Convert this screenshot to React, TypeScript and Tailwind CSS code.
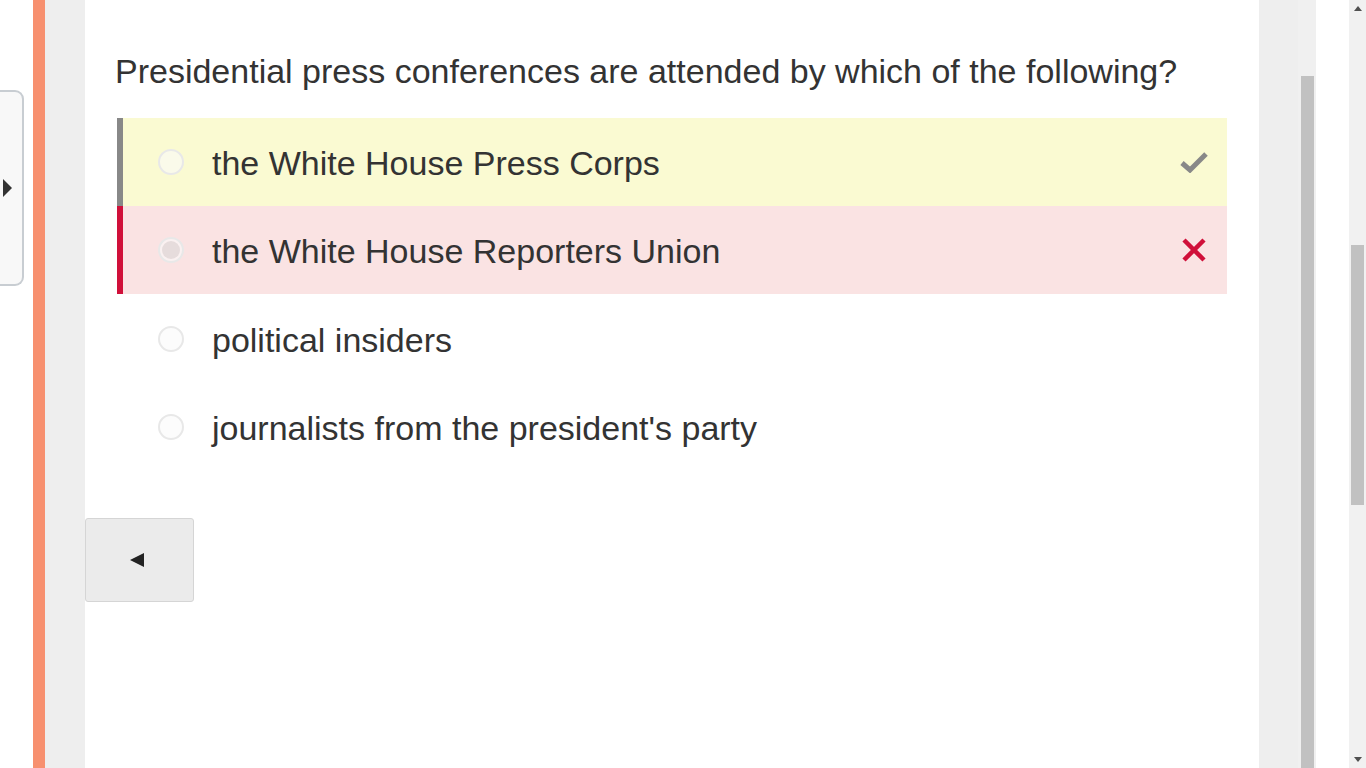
import React from "react";

type Opt = { label: string; state: "correct" | "wrong" | "none"; checked?: boolean };

const options: Opt[] = [
  { label: "the White House Press Corps", state: "correct" },
  { label: "the White House Reporters Union", state: "wrong", checked: true },
  { label: "political insiders", state: "none" },
  { label: "journalists from the president's party", state: "none" },
];

function Radio({ checked }: { checked?: boolean }) {
  return (
    <span className="flex h-[26px] w-[26px] items-center justify-center rounded-full border-2 border-[#e8e8e8] bg-[#fafafa]/60">
      {checked && <span className="h-[18px] w-[18px] rounded-full bg-[#e6dcdc]" />}
    </span>
  );
}

function OptionRow({ opt }: { opt: Opt }) {
  const rowCls =
    opt.state === "correct"
      ? "bg-[#fafad2] border-l-[6px] border-[#888888]"
      : opt.state === "wrong"
      ? "bg-[#fae3e3] border-l-[6px] border-[#d0103a]"
      : "border-l-[6px] border-transparent";
  return (
    <div className={`flex h-[88px] items-center ${rowCls}`}>
      <div className="flex w-[89px] justify-center pl-[7px]">
        <Radio checked={opt.checked} />
      </div>
      <span className="flex-1 pt-[2px] text-[34px] text-[#333333]">{opt.label}</span>
      <div className="flex w-[66px] justify-center">
        {opt.state === "correct" && (
          <svg width="28" height="22" viewBox="0 0 28 22">
            <path d="M2 12 L10 19 L26 3" fill="none" stroke="#888888" strokeWidth="5" strokeLinejoin="miter" />
          </svg>
        )}
        {opt.state === "wrong" && (
          <svg width="24" height="24" viewBox="0 0 24 24">
            <path d="M2 2 L22 22 M22 2 L2 22" stroke="#d0103a" strokeWidth="4.5" />
          </svg>
        )}
      </div>
    </div>
  );
}

export default function App() {
  return (
    <div className="flex h-[768px] w-[1366px] overflow-hidden bg-white font-['Liberation_Sans',Arial,sans-serif]">
      {/* drawer handle */}
      <div className="w-[33px] shrink-0 pt-[90px]">
        <div className="flex h-[196px] w-[24px] items-center rounded-r-[9px] border-2 border-l-0 border-[#c8cdd2] bg-[#f8f8f8]">
          <svg width="10" height="18" viewBox="0 0 10 18" className="ml-[3px]">
            <path d="M0 0 L9 9 L0 18 Z" fill="#333333" />
          </svg>
        </div>
      </div>
      <div className="w-[12px] shrink-0 bg-[#f7906f]" />
      <div className="w-[40px] shrink-0 bg-[#eeeeee]" />

      {/* main content */}
      <main className="flex w-[1174px] shrink-0 flex-col px-[32px] pt-[49px]">
        <h1 className="-ml-[2px] text-[34px] leading-[44px] font-normal text-[#333333]">
          Presidential press conferences are attended by which of the following?
        </h1>
        <div className="mt-[25px] flex flex-col">
          {options.slice(0, 2).map((o) => (
            <OptionRow key={o.label} opt={o} />
          ))}
          <div className="h-[1px]" />
          {options.slice(2).map((o) => (
            <OptionRow key={o.label} opt={o} />
          ))}
        </div>
        <div className="mt-[47px] -ml-[32px]">
          <button className="flex h-[84px] w-[109px] items-center justify-center rounded-[3px] border border-[#d5d5d5] bg-[#ebebeb]">
            <svg width="14" height="14" viewBox="0 0 14 14" className="mr-[6px]">
              <path d="M14 0 L0 7 L14 14 Z" fill="#222222" />
            </svg>
          </button>
        </div>
      </main>

      <div className="w-[39px] shrink-0 bg-[#eeeeee]" />
      {/* inner scrollbar */}
      <div className="w-[18px] shrink-0 bg-[#f0f0f0] pl-[3px] pt-[76px]">
        <div className="h-full w-[13px] bg-[#c1c1c1]" />
      </div>
      <div className="w-[33px] shrink-0 bg-white" />
      {/* page scrollbar */}
      <div className="flex w-[17px] shrink-0 flex-col items-center bg-[#f1f1f1]">
        <div className="flex h-[17px] items-center justify-center">
          <svg width="8" height="5" viewBox="0 0 8 5">
            <path d="M0 5 L4 0 L8 5 Z" fill="#505050" />
          </svg>
        </div>
        <div className="mt-[228px] h-[260px] w-[13px] bg-[#c1c1c1]" />
        <div className="flex-1" />
        <div className="flex h-[17px] items-center justify-center">
          <svg width="8" height="5" viewBox="0 0 8 5">
            <path d="M0 0 L4 5 L8 0 Z" fill="#505050" />
          </svg>
        </div>
      </div>
    </div>
  );
}
